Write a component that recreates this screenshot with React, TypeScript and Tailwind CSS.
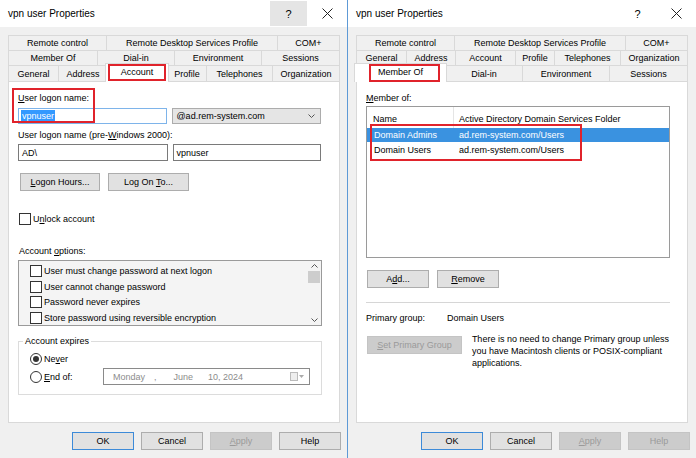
import type { ReactNode } from "react";

type TabDef = { label: ReactNode; w: string; selected?: boolean; mark?: string };

function TabRow({ tabs, h = "h-[15px]" }: { tabs: TabDef[]; h?: string }) {
  return (
    <div className={`flex ${h}`}>
      {tabs.map((t, i) =>
        t.selected ? (
          <div
            key={i}
            className={`relative z-10 -mx-[2px] -mt-[2px] -mb-px flex items-start justify-center border-x border-t border-[#d9d9d9] bg-white pt-[2px] ${t.w}`}
          >
            {t.label}
            {t.mark && <div className={`absolute border-2 border-[#e0232b] ${t.mark}`} />}
          </div>
        ) : (
          <div
            key={i}
            className={`flex items-center justify-center border-t border-l border-[#d9d9d9] bg-[#f0f0f0] ${t.w} ${
              i === tabs.length - 1 ? "border-r" : ""
            }`}
          >
            {t.label}
          </div>
        )
      )}
    </div>
  );
}

function Btn({ children, w = "w-[62px]", kind = "normal" }: { children: ReactNode; w?: string; kind?: "normal" | "default" | "disabled" }) {
  const cls =
    kind === "default"
      ? "border-[#3c8ad8] bg-[#e1e1e1] text-black"
      : kind === "disabled"
      ? "border-[#c4c4c4] bg-[#cccccc] text-[#9a9a9a]"
      : "border-[#adadad] bg-[#e1e1e1] text-black";
  return (
    <div className={`flex h-[18px] items-center justify-center border ${cls} ${w}`}>
      {children}
    </div>
  );
}

function Check({ children }: { children: ReactNode }) {
  return (
    <div className="flex h-[12px] items-center gap-[2px]">
      <div className="h-[12px] w-[12px] border border-[#333] bg-white" />
      <span>{children}</span>
    </div>
  );
}

function Radio({ on, children }: { on?: boolean; children: ReactNode }) {
  return (
    <div className="flex items-center gap-[2px]">
      <div className="flex h-[12px] w-[12px] items-center justify-center rounded-full border border-[#333] bg-white">
        {on && <div className="h-[6px] w-[6px] rounded-full bg-[#333]" />}
      </div>
      <span>{children}</span>
    </div>
  );
}

function TitleBar({ helpHover }: { helpHover?: boolean }) {
  return (
    <div className="flex h-[27px] items-start bg-white">
      <div className="flex-1 pl-[8px] pt-[8px] text-[10px] leading-[12px]">vpn user Properties</div>
      <div className={`mt-[1px] flex h-[25px] w-[37px] items-center justify-center text-[11px] ${helpHover ? "bg-[#e5e5e5]" : ""}`}>?</div>
      <div className="flex h-[25px] w-[40px] items-center justify-center pt-[2px]">
        <svg width="11" height="11" viewBox="0 0 11 11">
          <path d="M0.5 0.5L10.5 10.5M10.5 0.5L0.5 10.5" stroke="#222" strokeWidth="1" />
        </svg>
      </div>
    </div>
  );
}

function Footer({ rightDisabled }: { rightDisabled?: boolean }) {
  return (
    <div className="flex justify-end gap-[7px] pr-[6px] pt-[9px]">
      <Btn kind="default">OK</Btn>
      <Btn>Cancel</Btn>
      <Btn kind="disabled">
        <span><u>A</u>pply</span>
      </Btn>
      <Btn kind={rightDisabled ? "disabled" : "normal"}>Help</Btn>
    </div>
  );
}

const row1: TabDef[] = [
  { label: "Remote control", w: "w-[98px]" },
  { label: "Remote Desktop Services Profile", w: "w-[171px]" },
  { label: "COM+", w: "w-[63px]" },
];

function LeftDialog() {
  const row2: TabDef[] = [
    { label: "Member Of", w: "w-[89px]" },
    { label: "Dial-in", w: "w-[77px]" },
    { label: "Environment", w: "w-[87px]" },
    { label: "Sessions", w: "w-[79px]" },
  ];
  const row3: TabDef[] = [
    { label: "General", w: "w-[50px]" },
    { label: "Address", w: "w-[49px]" },
    { label: "Account", w: "w-[64px]", selected: true, mark: "top-0 bottom-[1px] left-[2px] right-[2px]" },
    { label: "Profile", w: "w-[39px]" },
    { label: "Telephones", w: "w-[66px]" },
    { label: "Organization", w: "w-[68px]" },
  ];
  return (
    <div className="flex h-full w-[348px] flex-col border-r border-[#5e9ad6] bg-[#f0f0f0]">
      <TitleBar helpHover />
      <div className="pl-[8px] pr-[7px] pt-[8px]">
        <TabRow tabs={row1} />
        <TabRow tabs={row2} />
        <TabRow tabs={row3} h="h-[16px]" />
        <div className="h-[342px] border border-[#d9d9d9] bg-white pl-[9px] pr-[18px] pt-[10px]">
          <div className="relative">
            <div className="h-[12px]">
              <u>U</u>ser logon name:
            </div>
            <div className="absolute -left-[6px] -top-[4px] h-[35px] w-[83px] border-2 border-[#e0232b]" />
          </div>
          <div className="mt-[4px] flex gap-[5px]">
            <div className="flex h-[16px] w-[150px] items-center border border-[#7eb4ea] bg-white pl-[2px]">
              <span className="bg-[#3399ff] px-px leading-[12px] text-white">vpnuser</span>
            </div>
            <div className="flex h-[16px] w-[149px] items-center justify-between border border-[#acacac] bg-[#e5e5e5] pl-[3px] pr-[5px]">
              <span>@ad.rem-system.com</span>
              <svg width="7" height="4" viewBox="0 0 7 4">
                <path d="M0.5 0.5L3.5 3.5L6.5 0.5" stroke="#555" fill="none" />
              </svg>
            </div>
          </div>
          <div className="mt-[5px] h-[12px]">
            User logon name (pre-<u>W</u>indows 2000):
          </div>
          <div className="mt-[3px] flex gap-[5px]">
            <div className="flex h-[17px] w-[150px] items-center border border-[#7a7a7a] bg-white pl-[3px]">AD\</div>
            <div className="flex h-[17px] w-[149px] items-center border border-[#7a7a7a] bg-white pl-[3px]">vpnuser</div>
          </div>
          <div className="mt-[12px] flex gap-[8px] pl-[2px]">
            <Btn w="w-[80px]">
              <span><u>L</u>ogon Hours...</span>
            </Btn>
            <Btn w="w-[81px]">
              <span>Log On <u>T</u>o...</span>
            </Btn>
          </div>
          <div className="mt-[22px] pl-[1px]">
            <Check>
              U<u>n</u>lock account
            </Check>
          </div>
          <div className="mt-[20px] h-[12px] pl-[1px]">
            Account <u>o</u>ptions:
          </div>
          <div className="mt-[3px] flex h-[66px] w-[304px] border border-[#9a9a9a] bg-[#f4f4f4]">
            <div className="flex flex-1 flex-col gap-[3.5px] pl-[11px] pt-[4px]">
              <Check>User must change password at next logon</Check>
              <Check>User cannot change password</Check>
              <Check>Password never expires</Check>
              <Check>Store password using reversible encryption</Check>
            </div>
            <div className="flex w-[14px] flex-col items-center py-[3px]">
              <svg width="7" height="4" viewBox="0 0 7 4">
                <path d="M0.5 3.5L3.5 0.5L6.5 3.5" stroke="#555" fill="none" />
              </svg>
              <div className="mb-auto mt-[3px] h-[12px] w-[12px] bg-[#cdcdcd]" />
              <svg width="7" height="4" viewBox="0 0 7 4">
                <path d="M0.5 0.5L3.5 3.5L6.5 0.5" stroke="#555" fill="none" />
              </svg>
            </div>
          </div>
          <div className="relative mt-[15px] h-[54px] w-[304px] border border-[#dcdcdc] pl-[11px] pt-[11px]">
            <div className="absolute -top-[7px] left-[4px] bg-white px-[2px] leading-[12px]">Account expires</div>
            <Radio on>
              Ne<u>v</u>er
            </Radio>
            <div className="mt-[3px] flex items-center">
              <div className="w-[73px]">
                <Radio>
                  <u>E</u>nd of:
                </Radio>
              </div>
              <div className="flex h-[17px] w-[207px] items-center border border-[#8a8a8a] bg-white pl-[9px] pr-[5px] text-[#8c8c8c]">
                <span>Monday</span>
                <span className="ml-[9px]">,</span>
                <span className="ml-[17px]">June</span>
                <span className="ml-[15px]">10, 2024</span>
                <div className="ml-auto flex items-center gap-[1px]">
                  <div className="h-[9px] w-[8px] border border-[#bbb] bg-[#eee]" />
                  <svg width="5" height="3" viewBox="0 0 5 3">
                    <path d="M0 0L2.5 3L5 0Z" fill="#aaa" />
                  </svg>
                </div>
              </div>
            </div>
          </div>
        </div>
      </div>
      <Footer />
    </div>
  );
}

function RightDialog() {
  const row2: TabDef[] = [
    { label: "General", w: "w-[50px]" },
    { label: "Address", w: "w-[49px]" },
    { label: "Account", w: "w-[60px]" },
    { label: "Profile", w: "w-[39px]" },
    { label: "Telephones", w: "w-[66px]" },
    { label: "Organization", w: "w-[68px]" },
  ];
  const row3: TabDef[] = [
    { label: "Member Of", w: "w-[93px]", selected: true, mark: "top-0 bottom-0 left-[14px] right-[6px]" },
    { label: "Dial-in", w: "w-[77px]" },
    { label: "Environment", w: "w-[87px]" },
    { label: "Sessions", w: "w-[79px]" },
  ];
  return (
    <div className="flex h-full w-[348px] flex-col bg-[#f0f0f0]">
      <TitleBar />
      <div className="pl-[8px] pr-[8px] pt-[8px]">
        <TabRow tabs={row1} />
        <TabRow tabs={row2} />
        <TabRow tabs={row3} h="h-[16px]" />
        <div className="h-[342px] border border-[#d9d9d9] bg-white pl-[9px] pr-[18px] pt-[10px]">
          <div className="h-[12px]">
            <u>M</u>ember of:
          </div>
          <div className="mt-[2px] h-[152px] w-[304px] border border-[#9a9a9a] bg-white">
            <div className="flex h-[21px] items-center">
              <div className="w-[86px] pl-[6px] pt-[2px]">Name</div>
              <div className="h-full w-px bg-[#e5e5e5]" />
              <div className="pl-[5px] pt-[2px]">Active Directory Domain Services Folder</div>
            </div>
            <div className="relative">
              <div className="flex h-[14px] items-center bg-[#3a92e0] text-white">
                <div className="w-[87px] pl-[7px]">Domain Admins</div>
                <div className="pl-[5px]">ad.rem-system.com/Users</div>
              </div>
              <div className="flex h-[15px] items-center">
                <div className="w-[87px] pl-[7px]">Domain Users</div>
                <div className="pl-[5px]">ad.rem-system.com/Users</div>
              </div>
              <div className="absolute -top-[4px] left-[3px] h-[37px] w-[212px] border-2 border-[#e0232b]" />
            </div>
          </div>
          <div className="mt-[12px] flex gap-[8px] pl-px">
            <Btn>
              <span>A<u>d</u>d...</span>
            </Btn>
            <Btn>
              <span><u>R</u>emove</span>
            </Btn>
          </div>
          <div className="mt-[14px] h-px w-[304px] bg-[#d6d6d6]" />
          <div className="mt-[9px] flex h-[12px]">
            <div className="w-[81px]">Primary group:</div>
            <div>Domain Users</div>
          </div>
          <div className="mt-[12px] flex gap-[10px] pl-px">
            <Btn kind="disabled" w="w-[95px]">
              <span><u>S</u>et Primary Group</span>
            </Btn>
            <div className="-mt-[3px] whitespace-nowrap leading-[12px]">
              There is no need to change Primary group unless
              <br />
              you have Macintosh clients or POSIX-compliant
              <br />
              applications.
            </div>
          </div>
        </div>
      </div>
      <Footer rightDisabled />
    </div>
  );
}

export default function App() {
  return (
    <div className="flex h-[458px] w-[696px] overflow-hidden bg-white font-['Liberation_Sans',Arial,sans-serif] text-[9px] leading-[12px] text-black">
      <LeftDialog />
      <RightDialog />
    </div>
  );
}
